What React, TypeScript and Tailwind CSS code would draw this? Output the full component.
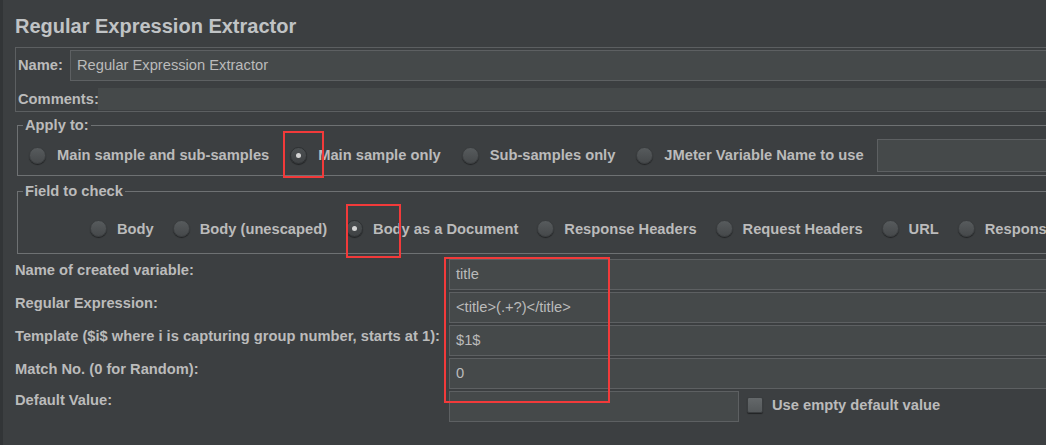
import React from 'react';

const Radio = ({ checked = false }: { checked?: boolean }) => (
  <span
    className={`flex h-[17px] w-[17px] shrink-0 items-center justify-center rounded-full border ${checked ? 'border-[#2e3133] bg-linear-to-b from-[#4c5052] to-[#3f4244]' : 'border-[#3a3d3f] bg-linear-to-b from-[#575b5d] to-[#46494b]'} shadow-[0_1px_1px_rgba(0,0,0,0.45)]`}
  >
    {checked && <span className="h-[5px] w-[5px] rounded-full bg-[#d4d4d4]" />}
  </span>
);

const RadioItem = ({ label, checked, wide }: { label: string; checked?: boolean; wide?: boolean }) => (
  <div className={`flex shrink-0 items-center ${wide ? 'gap-[11px]' : 'gap-[10px]'}`}>
    <Radio checked={checked} />
    <span>{label}</span>
  </div>
);

const Field = ({ value = '', className = '' }: { value?: string; className?: string }) => (
  <div
    className={`flex h-[31px] items-center border border-[#5d6062] bg-[#45494a] pl-[6px] font-normal text-[#bbbbbb] ${className}`}
  >
    {value}
  </div>
);

const rows = [
  { label: 'Name of created variable:', value: 'title' },
  { label: 'Regular Expression:', value: '<title>(.+?)</title>' },
  { label: 'Template ($i$ where i is capturing group number, starts at 1):', value: '$1$' },
  { label: 'Match No. (0 for Random):', value: '0' },
];

const fieldOptions = [
  { label: 'Body' },
  { label: 'Body (unescaped)' },
  { label: 'Body as a Document', checked: true },
  { label: 'Response Headers' },
  { label: 'Request Headers' },
  { label: 'URL' },
  { label: 'Response Code' },
  { label: 'Response Message' },
];

export default function App() {
  return (
    <div className="relative h-[445px] w-[1046px] overflow-hidden border-l-[3px] border-[#323537] bg-[#3c3f41] pl-[12px] font-['Liberation_Sans',Arial,sans-serif] text-[14.7px] font-bold whitespace-nowrap text-[#bbbbbb]">
      <h1 className="pt-[14px] text-[20px] leading-[24px] font-bold text-[#c0c3c5]">
        Regular Expression Extractor
      </h1>

      {/* name / comments */}
      <div className="mt-[9px] mr-[-20px] border border-[#5c5f61] pb-[1px] pl-[2px]">
        <div className="flex items-center pt-[2px]">
          <span className="w-[52px] shrink-0">Name:</span>
          <Field value="Regular Expression Extractor" className="flex-1" />
        </div>
        <div className="mt-[7px] flex h-[22px] items-center">
          <span className="w-[80px] shrink-0">Comments:</span>
          <div className="h-full flex-1 bg-[#45494a]" />
        </div>
      </div>

      {/* apply to */}
      <fieldset className="mt-[4px] mr-[-20px] ml-[2px] border border-[#6e7173] pb-[3px]">
        <legend className="ml-[5px] px-[2px] leading-[18px]">Apply to:</legend>
        <div className="mt-[5px] flex h-[33px] items-center gap-[21px] pl-[11px]">
          <RadioItem label="Main sample and sub-samples" wide />
          <RadioItem label="Main sample only" checked wide />
          <RadioItem label="Sub-samples only" wide />
          <RadioItem label="JMeter Variable Name to use" wide />
          <div className="ml-[-8px] h-[33px] flex-1 border border-[#5d6062] bg-[#45494a]" />
        </div>
      </fieldset>

      {/* field to check */}
      <fieldset className="mt-[6px] mr-[-20px] ml-[2px] border border-[#6e7173] pb-[12px]">
        <legend className="ml-[5px] px-[2px] leading-[18px]">Field to check</legend>
        <div className="mt-[17px] flex h-[24px] items-center gap-[19px] overflow-hidden pl-[72px]">
          {fieldOptions.map((o) => (
            <RadioItem key={o.label} label={o.label} checked={o.checked} />
          ))}
        </div>
      </fieldset>

      {/* extractor settings */}
      <div className="mt-[5px] flex flex-col gap-[2px]">
        {rows.map((r) => (
          <div key={r.label} className="flex h-[31px] items-start">
            <span className="relative z-10 w-[434px] shrink-0 leading-[22px]">{r.label}</span>
            <Field value={r.value} className="mr-[-20px] flex-1" />
          </div>
        ))}
        <div className="flex h-[31px] items-start">
          <span className="w-[434px] shrink-0 leading-[18px]">Default Value:</span>
          <Field className="h-[30px] w-[290px]" />
          <div className="mt-[6px] ml-[8px] flex items-center gap-[9px]">
            <span className="h-[16px] w-[16px] rounded-[2px] border border-[#3a3d3f] bg-linear-to-b from-[#64686a] to-[#54585a] shadow-[0_1px_1px_rgba(0,0,0,0.45)]" />
            <span className="leading-[16px]">Use empty default value</span>
          </div>
        </div>
      </div>

      {/* red annotation boxes */}
      <div className="absolute top-[131px] left-[280px] h-[47px] w-[41px] border-2 border-[#f23a3a]" />
      <div className="absolute top-[204px] left-[343px] h-[54px] w-[55px] border-2 border-[#f23a3a]" />
      <div className="absolute top-[257px] left-[441px] h-[146px] w-[166px] border-2 border-[#f23a3a]" />
    </div>
  );
}
